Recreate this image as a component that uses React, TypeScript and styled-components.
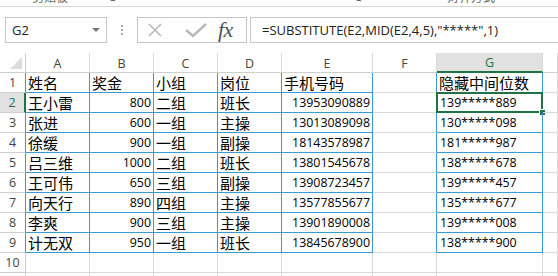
import { Fragment } from 'react'
import styled, { createGlobalStyle } from 'styled-components'

const BLUE = '#3a9ad6'
const GRID = '#d9d9d9'
const HEAD = '#cfcfcf'
const GREEN = '#217346'

const GlobalStyle = createGlobalStyle`
  html, body {
    margin: 0;
    padding: 0;
    background: #fff;
    overflow: hidden;
  }
  body {
    font-family: 'Open Sans', 'Noto Sans CJK SC', sans-serif;
  }
`

const Ribbon = styled.div`
  height: 6px;
  border-bottom: 1px solid #d6d6d6;
  overflow: hidden;
  display: flex;
  align-items: flex-start;
  color: #666;
  font-family: 'Noto Sans CJK SC', sans-serif;
  font-size: 12px;
  line-height: 12px;
`

const RibbonText = styled.span<{ $left: number }>`
  margin-top: -9px;
  margin-left: ${p => p.$left}px;
  white-space: nowrap;
`

const FormulaBar = styled.div`
  height: 46px;
  box-sizing: border-box;
  padding: 10px 0 0 5px;
  display: flex;
  align-items: flex-start;
`

const NameBox = styled.div`
  width: 102px;
  height: 26px;
  box-sizing: border-box;
  border: 1px solid #c6c6c6;
  display: flex;
  align-items: center;
  justify-content: space-between;
  padding: 0 6px 0 6px;
  font-size: 13px;
  color: #222;
`

const Caret = styled.span`
  width: 0;
  height: 0;
  border-left: 4px solid transparent;
  border-right: 4px solid transparent;
  border-top: 4px solid #777;
`

const Dots = styled.div`
  width: 2px;
  margin: 8px 14px 0 14px;
  display: flex;
  flex-direction: column;
  gap: 2px;
  span {
    width: 2px;
    height: 2px;
    background: #a8a8a8;
  }
`

const FxBox = styled.div`
  width: 110px;
  height: 26px;
  box-sizing: border-box;
  border: 1px solid #c6c6c6;
  display: flex;
  align-items: center;
  padding-left: 9px;
`

const FxButton = styled.span<{ $gap?: number }>`
  margin-left: ${p => p.$gap ?? 0}px;
  display: flex;
  align-items: center;
`

const FxLabel = styled.span`
  font-family: 'Liberation Serif', serif;
  font-style: italic;
  font-size: 22px;
  color: #505050;
  letter-spacing: -0.5px;
  line-height: 20px;
`

const FormulaInput = styled.div`
  flex: 1;
  height: 26px;
  margin-left: 3px;
  box-sizing: border-box;
  border: 1px solid #c6c6c6;
  border-right: none;
  display: flex;
  align-items: center;
  padding-left: 11px;
  font-size: 13px;
  color: #222;
  white-space: nowrap;
`

const Sheet = styled.div`
  display: grid;
  grid-template-columns: 26px 64px 64px 64px 64px 91px 64px 106px 1fr;
  grid-template-rows: repeat(12, 20px);
`

const ColHead = styled.div<{ $active?: boolean; $right: string }>`
  box-sizing: border-box;
  border-right: 1px solid ${p => p.$right};
  border-bottom: ${p => (p.$active ? `2px solid ${GREEN}` : `1px solid ${HEAD}`)};
  background: ${p => (p.$active ? '#e1e1e1' : '#fff')};
  color: ${p => (p.$active ? GREEN : '#444')};
  font-size: 12.5px;
  display: flex;
  align-items: center;
  justify-content: center;
  padding-top: 1px;
  position: relative;
`

const Corner = styled.span`
  position: absolute;
  right: 3px;
  bottom: 3px;
  width: 0;
  height: 0;
  border-left: 12px solid transparent;
  border-bottom: 12px solid #dcdcdc;
`

const RowHead = styled.div<{ $active?: boolean; $right: string }>`
  box-sizing: border-box;
  border-right: ${p => (p.$active ? `2px solid ${GREEN}` : `1px solid ${p.$right}`)};
  border-bottom: 1px solid ${HEAD};
  background: ${p => (p.$active ? '#e1e1e1' : '#fff')};
  color: ${p => (p.$active ? GREEN : '#444')};
  font-size: 12.5px;
  display: flex;
  align-items: center;
  justify-content: center;
`

const Cell = styled.div<{ $right: string; $bottom: string; $num?: boolean; $cjk?: boolean }>`
  box-sizing: border-box;
  position: relative;
  border-right: 1px solid ${p => p.$right};
  border-bottom: 1px solid ${p => p.$bottom};
  display: flex;
  align-items: flex-end;
  justify-content: ${p => (p.$num ? 'flex-end' : 'flex-start')};
  padding: ${p => (p.$cjk ? '0 2px 1px 2px' : '0 2px 3px 3px')};
  font-family: ${p => (p.$cjk ? `'Noto Sans CJK SC', sans-serif` : `'Open Sans', sans-serif`)};
  font-size: ${p => (p.$cjk ? '15px' : '12.4px')};
  line-height: ${p => (p.$cjk ? '17px' : '13px')};
  color: #000;
  white-space: nowrap;
`

const Selection = styled.div`
  position: absolute;
  top: -1px;
  left: -1px;
  right: -1px;
  bottom: -1px;
  border: 2px solid ${GREEN};
`

const FillHandle = styled.span`
  position: absolute;
  right: -4px;
  bottom: -4px;
  width: 5px;
  height: 5px;
  background: ${GREEN};
  box-shadow: 0 0 0 1px #fff;
`

const data: string[][] = [
  ['姓名', '奖金', '小组', '岗位', '手机号码', '', '隐藏中间位数'],
  ['王小雷', '800', '二组', '班长', '13953090889', '', '139*****889'],
  ['张进', '600', '一组', '主操', '13013089098', '', '130*****098'],
  ['徐缓', '900', '一组', '副操', '18143578987', '', '181*****987'],
  ['吕三维', '1000', '二组', '班长', '13801545678', '', '138*****678'],
  ['王可伟', '650', '三组', '副操', '13908723457', '', '139*****457'],
  ['向天行', '890', '四组', '主操', '13577855677', '', '135*****677'],
  ['李爽', '900', '三组', '主操', '13901890008', '', '139*****008'],
  ['计无双', '950', '一组', '班长', '13845678900', '', '138*****900'],
]

const letters = ['A', 'B', 'C', 'D', 'E', 'F', 'G', '']

// row 1..9, col 1..8 (A..H)
const inTable = (r: number, c: number) => r >= 1 && r <= 9 && ((c >= 1 && c <= 5) || c === 7)

const CloseIcon = () => (
  <svg width="16" height="16" viewBox="0 0 16 16">
    <path d="M2 2 L14 14 M14 2 L2 14" stroke="#b8b8b8" strokeWidth="1.6" fill="none" />
  </svg>
)

const CheckIcon = () => (
  <svg width="24" height="16" viewBox="0 0 24 16">
    <path d="M2 8 L9 14 L22 2" stroke="#b8b8b8" strokeWidth="2.4" fill="none" />
  </svg>
)

const App = () => {
  const rows = Array.from({ length: 11 }, (_, i) => i + 1)
  return (
    <>
      <GlobalStyle />
      <Ribbon>
        <RibbonText $left={32}>剪贴板</RibbonText>
        <RibbonText $left={37}>↘</RibbonText>
        <RibbonText $left={234}>↘</RibbonText>
        <RibbonText $left={84}>对齐方式</RibbonText>
      </Ribbon>
      <FormulaBar>
        <NameBox>
          G2
          <Caret />
        </NameBox>
        <Dots>
          <span />
          <span />
          <span />
        </Dots>
        <FxBox>
          <FxButton>
            <CloseIcon />
          </FxButton>
          <FxButton $gap={21}>
            <CheckIcon />
          </FxButton>
          <FxButton $gap={10}>
            <FxLabel>fx</FxLabel>
          </FxButton>
        </FxBox>
        <FormulaInput>=SUBSTITUTE(E2,MID(E2,4,5),"*****",1)</FormulaInput>
      </FormulaBar>
      <Sheet>
        <ColHead $right={HEAD}>
          <Corner />
        </ColHead>
        {letters.map((l, i) => (
          <ColHead key={i} $active={l === 'G'} $right={GRID}>
            {l}
          </ColHead>
        ))}
        {rows.map(r => (
          <Fragment key={r}>
            <RowHead $active={r === 2} $right={inTable(r, 1) ? BLUE : HEAD}>
              {r}
            </RowHead>
            {Array.from({ length: 8 }, (_, k) => {
              const c = k + 1
              const text = r <= 9 ? data[r - 1][k] ?? '' : ''
              const right = inTable(r, c) || inTable(r, c + 1) ? BLUE : GRID
              const bottom = inTable(r, c) || inTable(r + 1, c) ? BLUE : GRID
              const cjk = /[\u4e00-\u9fff]/.test(text)
              const num = r > 1 && (c === 2 || c === 5)
              return (
                <Cell key={c} $right={right} $bottom={bottom} $cjk={cjk} $num={num}>
                  {text}
                  {r === 2 && c === 7 && (
                    <Selection>
                      <FillHandle />
                    </Selection>
                  )}
                </Cell>
              )
            })}
          </Fragment>
        ))}
      </Sheet>
    </>
  )
}

export default App
